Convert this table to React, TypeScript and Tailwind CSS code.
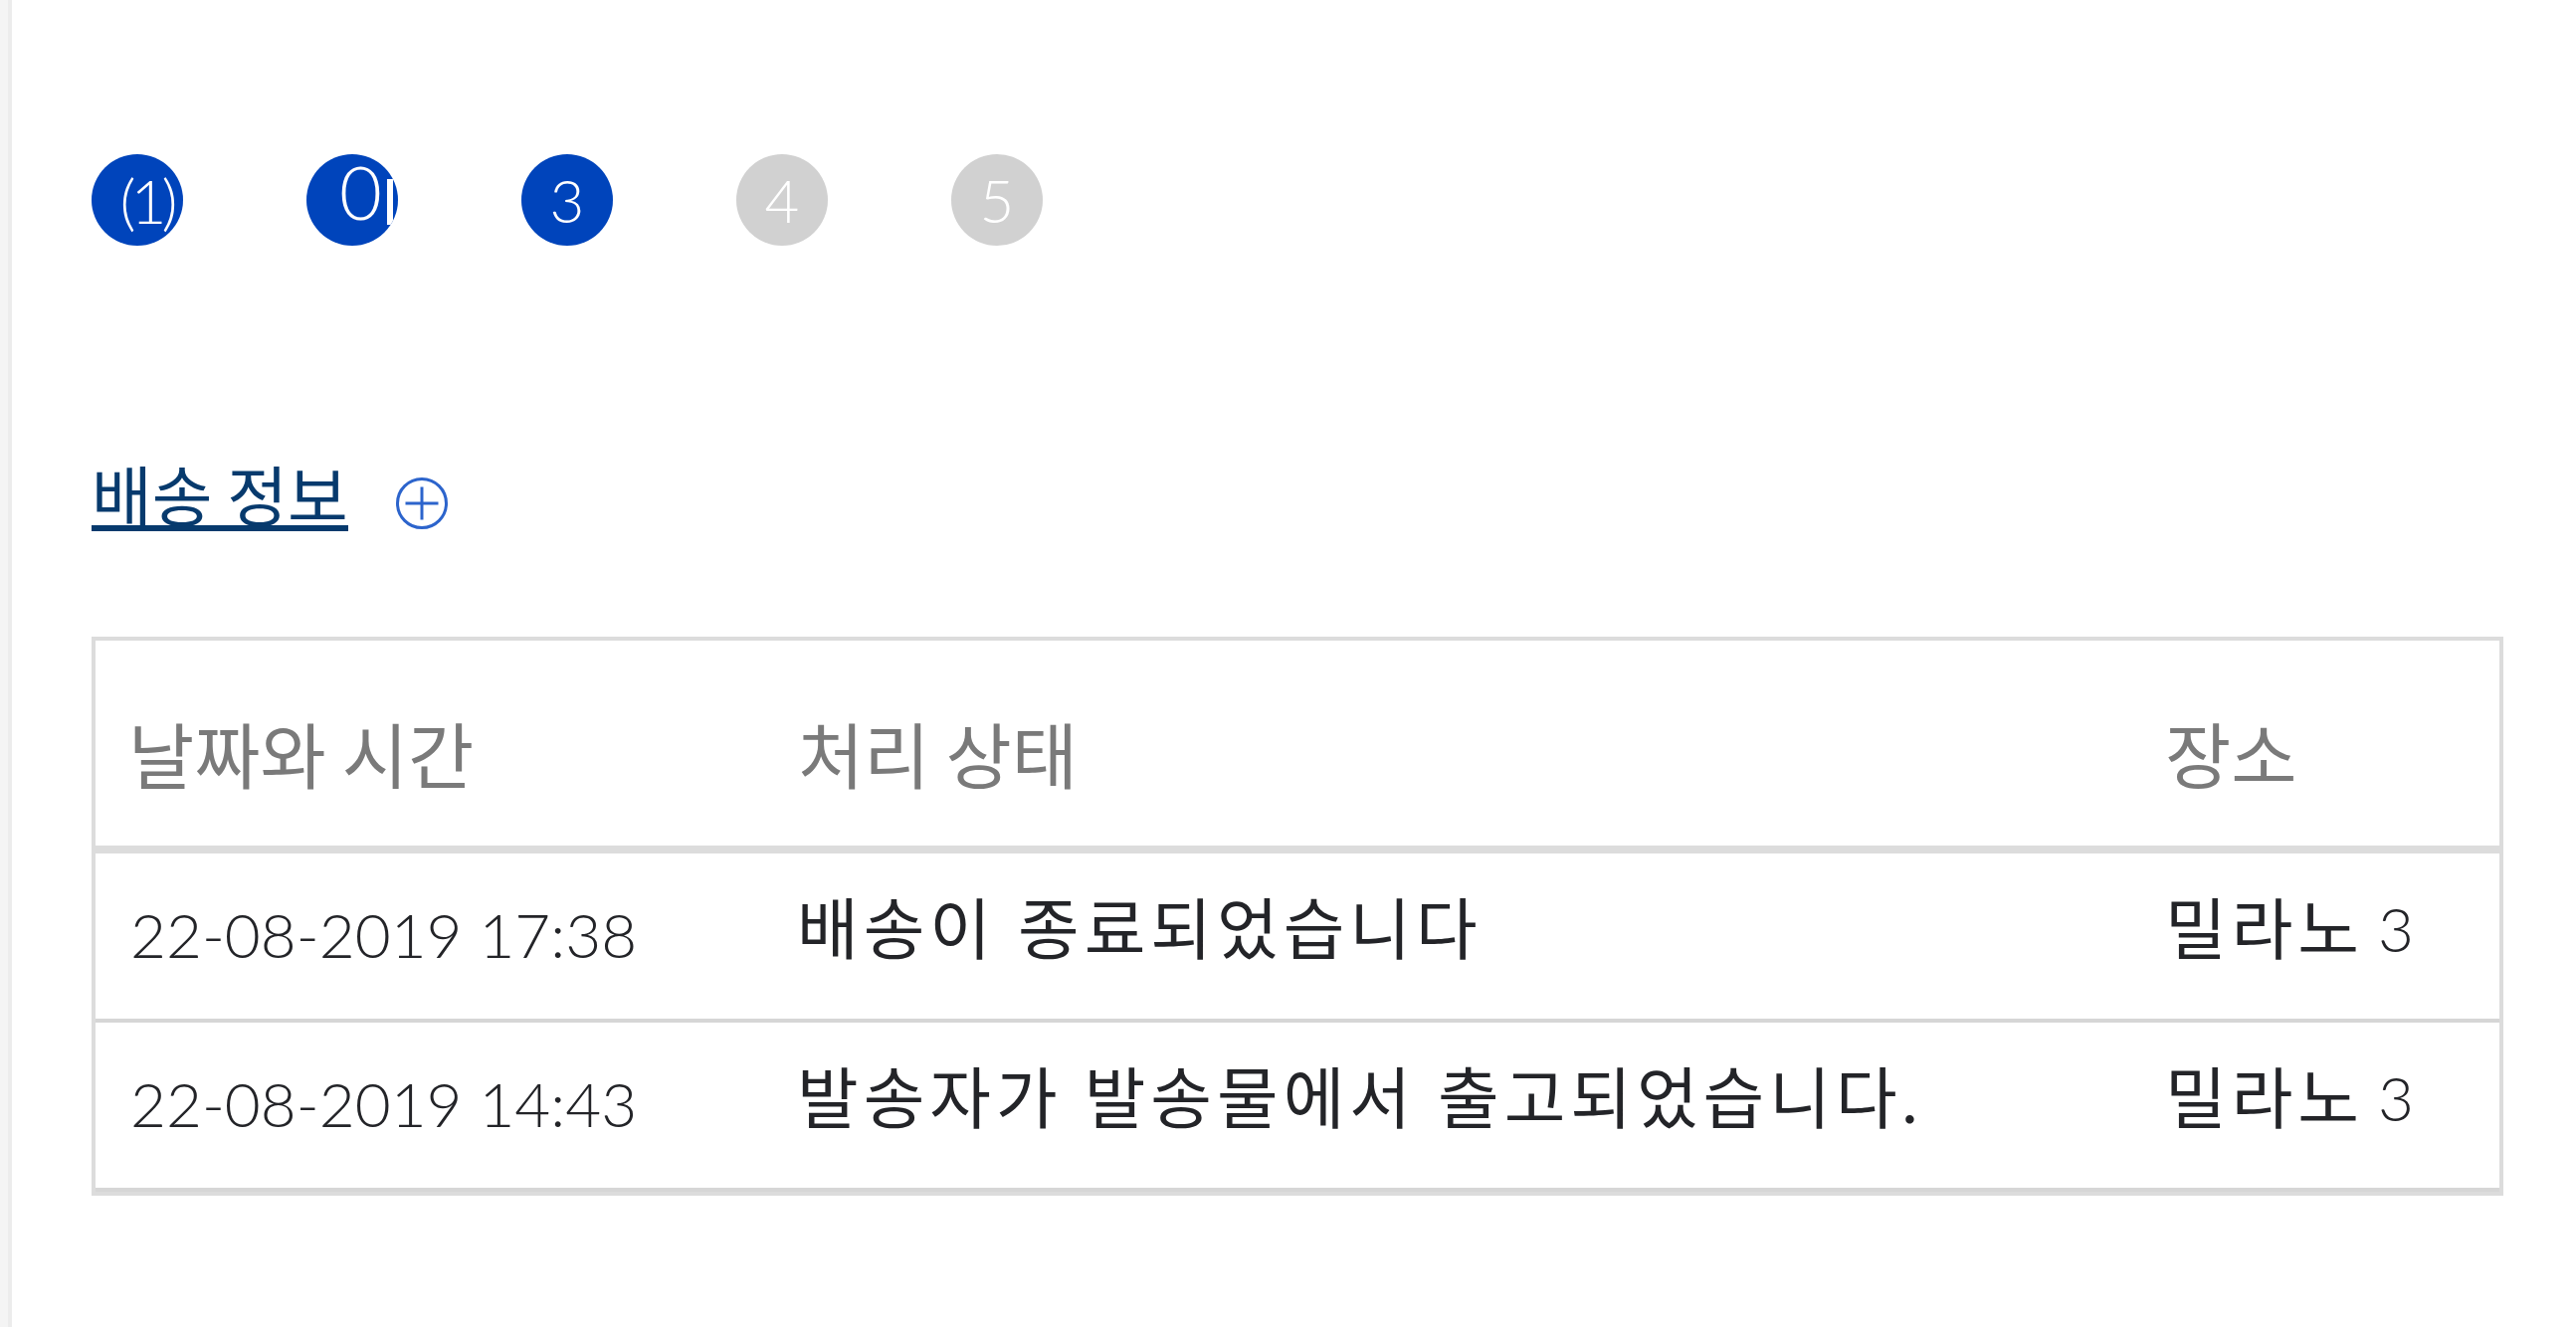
import React from "react";

const KR = "font-['Noto_Sans_CJK_KR',sans-serif]";
const LATN = "font-['Lato','Noto_Sans_CJK_KR',sans-serif]";

function Step({ n, active }: { n: number; active: boolean }) {
  const bg = active ? "bg-[#0044bb]" : "bg-[#d1d1d1]";
  return (
    <div className={`relative w-[92px] h-[92px] rounded-full overflow-hidden ${bg} text-white ${LATN} font-light`}>
      {n === 1 && (
        <div className="absolute inset-0 flex items-center justify-center">
          <span className="text-[62px] leading-none translate-x-[9px] tracking-[-5px]">(1)</span>
        </div>
      )}
      {n === 2 && (
        <>
          <span className="absolute left-[33px] top-[1px] text-[74px] leading-none">0</span>
          <span className="absolute left-[81px] top-[25px] w-[6px] h-[46px] bg-white" />
        </>
      )}
      {n > 2 && (
        <div className="absolute inset-0 flex items-center justify-center">
          <span className="text-[60px] leading-none">{n}</span>
        </div>
      )}
    </div>
  );
}

const cols = "grid grid-cols-[674px_1373px_1fr]";

function Row({ date, status }: { date: string; status: string }) {
  return (
    <div className={`${cols} h-[170px] border-b-4 border-[#d6d6d6] text-[#232428]`}>
      <div className={`flex items-center pl-[35px] pb-[4px] ${LATN} font-light text-[62px] leading-none whitespace-nowrap`}>
        {date}
      </div>
      <div className={`flex items-center pl-[31px] pb-[16px] ${LATN} text-[67px] tracking-[5px] leading-none whitespace-nowrap`}>
        {status}
      </div>
      <div className={`flex items-center pl-[33px] pb-[16px] ${LATN} text-[67px] tracking-[5px] leading-none whitespace-nowrap`}>
        밀라노 <span className="font-light text-[62px] tracking-normal ml-[14px]">3</span>
      </div>
    </div>
  );
}

export default function App() {
  return (
    <div className="flex min-h-[1334px] bg-white">
      <div className="w-[8px] bg-[#f4f4f4]" />
      <div className="w-[4px] bg-[#ececec]" />
      <div className="flex-1 pl-[80px] pt-[155px]">
        <div className="flex gap-[124px]">
          {[1, 2, 3, 4, 5].map((n) => (
            <Step key={n} n={n} active={n <= 3} />
          ))}
        </div>

        <div className="mt-[215px] flex items-start gap-[48px]">
          <span className={`inline-block ${KR} text-[66px] leading-none text-[#073a6d] border-b-[6px] border-[#073a6d] whitespace-nowrap`}>
            배송 정보
          </span>
          <svg width="52" height="52" viewBox="0 0 52 52" className="mt-[18px]" fill="none">
            <circle cx="26" cy="26" r="24.5" stroke="#2c64cc" strokeWidth="3" />
            <line x1="9.5" y1="26" x2="42.5" y2="26" stroke="#2c64cc" strokeWidth="3" />
            <line x1="26" y1="9.5" x2="26" y2="42.5" stroke="#2c64cc" strokeWidth="3" />
          </svg>
        </div>

        <div className="mt-[106px] w-[2424px] border-4 border-[#dcdcdc] bg-white">
          <div className={`${cols} h-[214px] border-b-[8px] border-[#dcdcdc] text-[#7a7a7a] ${KR} text-[72px] leading-none`}>
            <div className="flex items-center pl-[33px] pt-[17px] whitespace-nowrap">날짜와 시간</div>
            <div className="flex items-center pl-[32px] pt-[17px] whitespace-nowrap">처리 상태</div>
            <div className="flex items-center pl-[33px] pt-[17px] whitespace-nowrap">장소</div>
          </div>
          <Row date="22-08-2019 17:38" status="배송이 종료되었습니다" />
          <Row date="22-08-2019 14:43" status="발송자가 발송물에서 출고되었습니다." />
        </div>
      </div>
    </div>
  );
}
